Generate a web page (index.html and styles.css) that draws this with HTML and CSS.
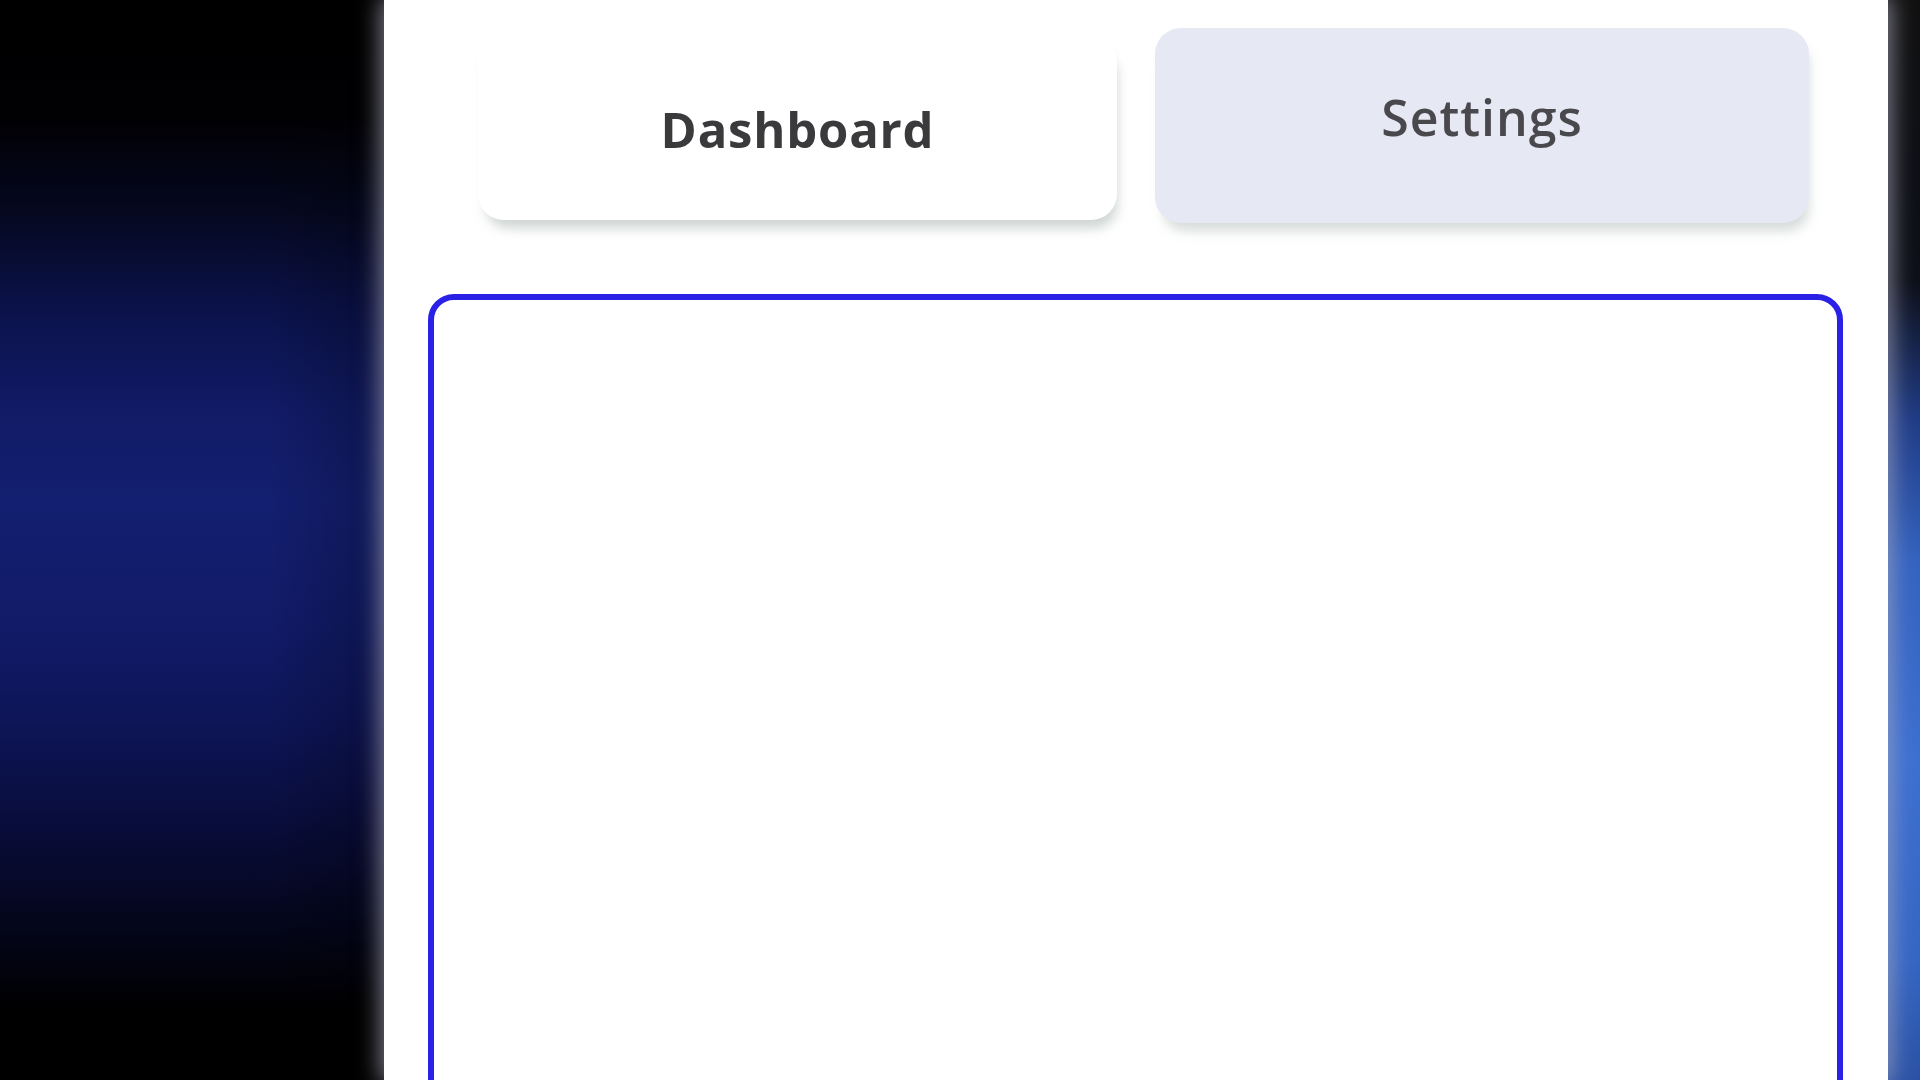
FILE: index.html
```html
<!DOCTYPE html>
<html lang="en">
<head>
<meta charset="utf-8">
<title>Dashboard</title>
<link rel="stylesheet" href="styles.css">
</head>
<body>
  <div class="backdrop-left"></div>
  <main class="panel">
    <nav class="tabs">
      <button class="tab tab-active">Dashboard</button>
      <button class="tab tab-muted">Settings</button>
    </nav>
    <section class="content-box"></section>
  </main>
  <div class="backdrop-right"></div>
</body>
</html>
```

FILE: styles.css
```css
html, body {
  margin: 0;
  padding: 0;
  height: 1080px;
  overflow: hidden;
}

body {
  display: flex;
  background: #000;
  font-family: "Open Sans", "Liberation Sans", sans-serif;
}

.backdrop-left {
  width: 384px;
  flex: none;
  background:
    linear-gradient(to right, rgba(0,0,0,0) 0, rgba(0,0,0,0) 70%, rgba(0,0,0,0.25) 100%),
    linear-gradient(to bottom,
      #000 0,
      #010104 120px,
      #05081f 210px,
      #0b124a 310px,
      #111b66 410px,
      #131f70 500px,
      #111b68 620px,
      #0e1558 720px,
      #090d3c 820px,
      #04061c 920px,
      #000 1010px);
}

.backdrop-right {
  width: 32px;
  flex: none;
  background:
    linear-gradient(to bottom,
      #111 0,
      #0d0f18 280px,
      #203c86 420px,
      #3463c0 560px,
      #3d70d2 760px,
      #3566c4 960px,
      #2a52a6 1080px);
}

.panel {
  flex: 1;
  background: #fff;
  display: flex;
  flex-direction: column;
  padding: 28px 45px 0 44px;
  box-shadow: 0 0 22px 3px rgba(170, 170, 190, 0.75);
  position: relative;
  z-index: 1;
}

.tabs {
  display: flex;
  align-items: flex-start;
  gap: 38px;
  padding: 0 34px 0 50px;
}

.tab {
  border: none;
  font-family: inherit;
  display: flex;
  align-items: center;
  justify-content: center;
  border-radius: 26px;
  padding: 0;
}

.tab-active {
  width: 639px;
  height: 183px;
  margin-top: 9px;
  background: #fff;
  color: #3a3a3d;
  font-size: 49px;
  font-weight: 700;
  letter-spacing: 0.8px;
  box-shadow: 4px 12px 12px -4px rgba(165, 178, 172, 0.55);
}

.tab-muted {
  width: 654px;
  height: 195px;
  padding-bottom: 18px;
  background: #e6e8f4;
  color: #48484d;
  font-size: 50px;
  font-weight: 600;
  letter-spacing: 1px;
  box-shadow: 4px 12px 12px -4px rgba(165, 178, 172, 0.45);
}

.content-box {
  margin-top: 71px;
  height: 900px;
  border: 6px solid #2b20e6;
  border-radius: 26px;
  flex: none;
}
```
